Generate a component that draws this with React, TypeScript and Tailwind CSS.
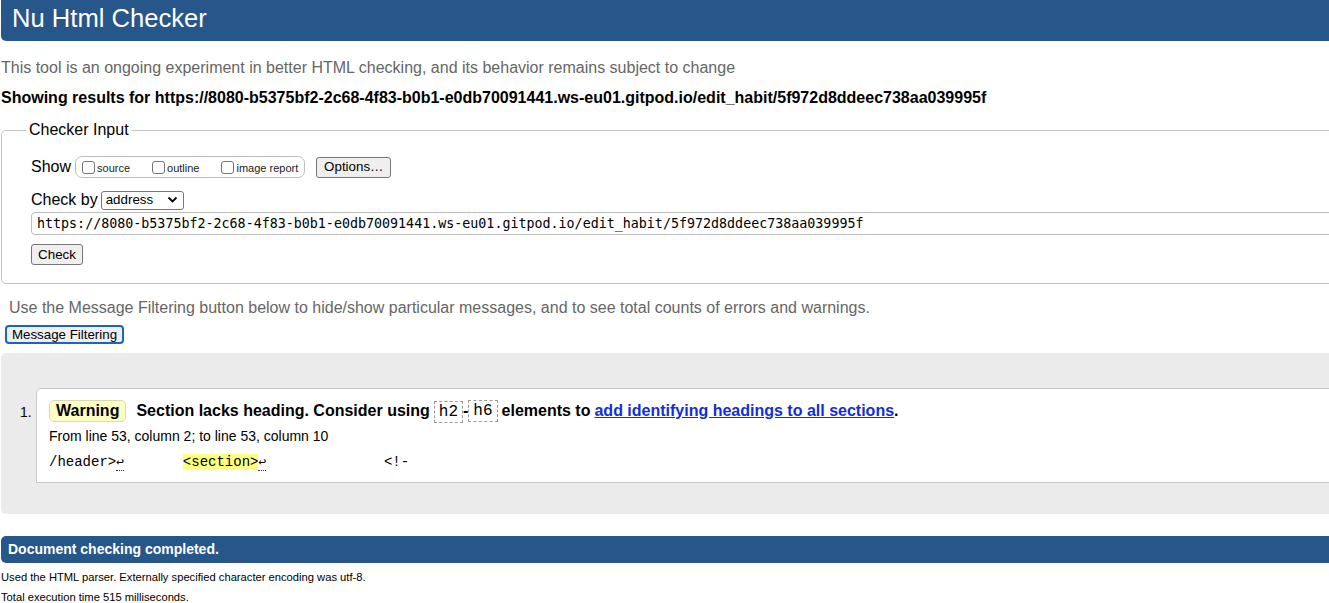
import React from 'react';

// ===========================================
// CONSTANTS
// ===========================================

const PAGE_URL =
  'https://8080-b5375bf2-2c68-4f83-b0b1-e0db70091441.ws-eu01.gitpod.io/edit_habit/5f972d8ddeec738aa039995f';

const SANS = "font-['Liberation_Sans',Arial,sans-serif]";
const MONO = "font-['DejaVu_Sans_Mono',monospace]";
const COURIER = "font-['Liberation_Mono','Courier_New',monospace]";

// ===========================================
// FORM BITS
// ===========================================

function NativeButton({ children, className = '' }: { children: React.ReactNode; className?: string }) {
  return (
    <button
      type="button"
      className={`block h-[21px] px-[6px] border border-[#767676] rounded-[3px] bg-[#efefef] text-[13.33px] leading-none text-black ${SANS} ${className}`}
    >
      {children}
    </button>
  );
}

function Checkbox({ label }: { label: string }) {
  return (
    <label className="flex items-center mr-[22px] last:mr-0">
      <span className="w-[13px] h-[13px] border border-[#767676] rounded-[3px] bg-white mr-[2px]" />
      <span className="text-[11px] text-[#222] mt-[2px]">{label}</span>
    </label>
  );
}

/** Code span with a dashed outline, as used for element names in messages */
function CodeBox({ children }: { children: React.ReactNode }) {
  return (
    <code
      className={`inline-block border border-dashed border-[#999] px-[4px] h-[22px] leading-[20px] align-middle font-normal text-[16px] ${COURIER}`}
    >
      {children}
    </code>
  );
}

/** Return-arrow marker with dotted underline in the extract */
function Lf() {
  return <span className="border-b border-dotted border-[#333] text-[13px]">↩</span>;
}

// ===========================================
// APP
// ===========================================

export default function App() {
  return (
    <div className={`w-[1329px] h-[603px] overflow-hidden bg-white text-black ${SANS}`}>
      <div className="w-[1345px] pl-[1px]">
        {/* Title bar */}
        <h1 className="h-[41px] bg-[#26568a] rounded-bl-[5px] pl-[11px] text-white text-[25.6px] leading-[37px]">
          Nu Html Checker
        </h1>

        <p className="mt-[18px] text-[16px] leading-[18px] text-[#666]">
          This tool is an ongoing experiment in better HTML checking, and its behavior remains subject to change
        </p>
        <p className="mt-[12px] text-[16px] leading-[18px] font-bold">Showing results for {PAGE_URL}</p>

        {/* Checker input */}
        <fieldset className="mt-[14px] border border-[#c3c3c3] rounded-[5px] pb-[18px]">
          <legend className="ml-[24px] px-[3px] text-[16px] leading-[18px]">Checker Input</legend>

          <div className="pl-[29px]">
            <div className="flex items-center mt-[17px] h-[22px]">
              <span className="text-[16px]">Show</span>
              <div className="flex items-center ml-[4px] h-[22px] border border-[#bdbdbd] rounded-[7px] pl-[6px] pr-[6px]">
                <Checkbox label="source" />
                <Checkbox label="outline" />
                <Checkbox label="image report" />
              </div>
              <NativeButton className="ml-[11px] w-[75px]">Options…</NativeButton>
            </div>

            <div className="flex items-center mt-[12px] h-[20px]">
              <span className="text-[16px]">Check by</span>
              <div className="ml-[3px] w-[83px] h-[19px] border border-[#767676] rounded-[3px] flex items-center justify-between px-[4px] text-[13.33px]">
                <span>address</span>
                <svg width="11" height="8" viewBox="0 0 11 8" className="mr-[1px]">
                  <path d="M1.5 1.5 L5.5 5.5 L9.5 1.5" fill="none" stroke="#000" strokeWidth="1.8" />
                </svg>
              </div>
            </div>

            <div
              className={`mt-[2px] h-[23px] border border-[#bdbdbd] rounded-[4px] pl-[5px] flex items-center text-[13.33px] whitespace-nowrap ${MONO}`}
            >
              {PAGE_URL}
            </div>

            <NativeButton className="mt-[9px] w-[52px] h-[20px]">Check</NativeButton>
          </div>
        </fieldset>

        {/* Message filtering */}
        <p className="mt-[15px] ml-[8px] text-[16px] leading-[18px] text-[#666]">
          Use the Message Filtering button below to hide/show particular messages, and to see total counts of errors
          and warnings.
        </p>
        <button
          type="button"
          className="block mt-[8px] ml-[4px] h-[19px] w-[119px] border-2 border-[#1a64c8] rounded-[4px] bg-[#efefef] text-[13.33px] leading-none"
        >
          Message Filtering
        </button>

        {/* Results */}
        <div className="mt-[9px] h-[161px] bg-[#ebebeb] rounded-l-[5px] pt-[35px] pl-[35px]">
          <div className="flex">
            <span className="w-[35px] -ml-[35px] pl-[19px] pt-[14px] text-[14px]">1.</span>
            <div className="flex-1 h-[95px] bg-white border border-[#c9c9c9] rounded-tl-[5px] pl-[12px] pt-[11px]">
              <div className="flex items-center h-[22px] text-[16px] font-bold whitespace-nowrap">
                <span className="h-[22px] px-[6px] bg-[#ffffc4] border border-[#d9d9b0] rounded-[5px] leading-[20px]">
                  Warning
                </span>
                <span className="ml-[10px]">Section lacks heading. Consider using</span>
                <span className="ml-[4px]">
                  <CodeBox>h2</CodeBox>
                </span>
                <span>-</span>
                <CodeBox>h6</CodeBox>
                <span className="ml-[4px]">elements to</span>
                <a href="#" className="ml-[4px] text-[#0e2ee0] underline">
                  add identifying headings to all sections
                </a>
                <span>.</span>
              </div>
              <p className="mt-[5px] text-[14px] leading-[18px]">From line 53, column 2; to line 53, column 10</p>
              <p className={`mt-[8px] text-[14px] leading-[18px] whitespace-pre ${COURIER}`}>
                {'/header>'}
                <Lf />
                {'       '}
                <mark className="bg-[#ffff80]">{'<section>'}</mark>
                <Lf />
                {'              <!-'}
              </p>
            </div>
          </div>
        </div>

        {/* Footer */}
        <div className="mt-[22px] h-[27px] bg-[#26568a] rounded-l-[5px] pl-[7px] flex items-center text-white text-[14px] font-bold">
          Document checking completed.
        </div>
        <p className="mt-[8px] text-[11.2px] leading-[13px]">
          Used the HTML parser. Externally specified character encoding was utf-8.
        </p>
        <p className="mt-[7px] text-[11.2px] leading-[13px]">Total execution time 515 milliseconds.</p>
      </div>
    </div>
  );
}
